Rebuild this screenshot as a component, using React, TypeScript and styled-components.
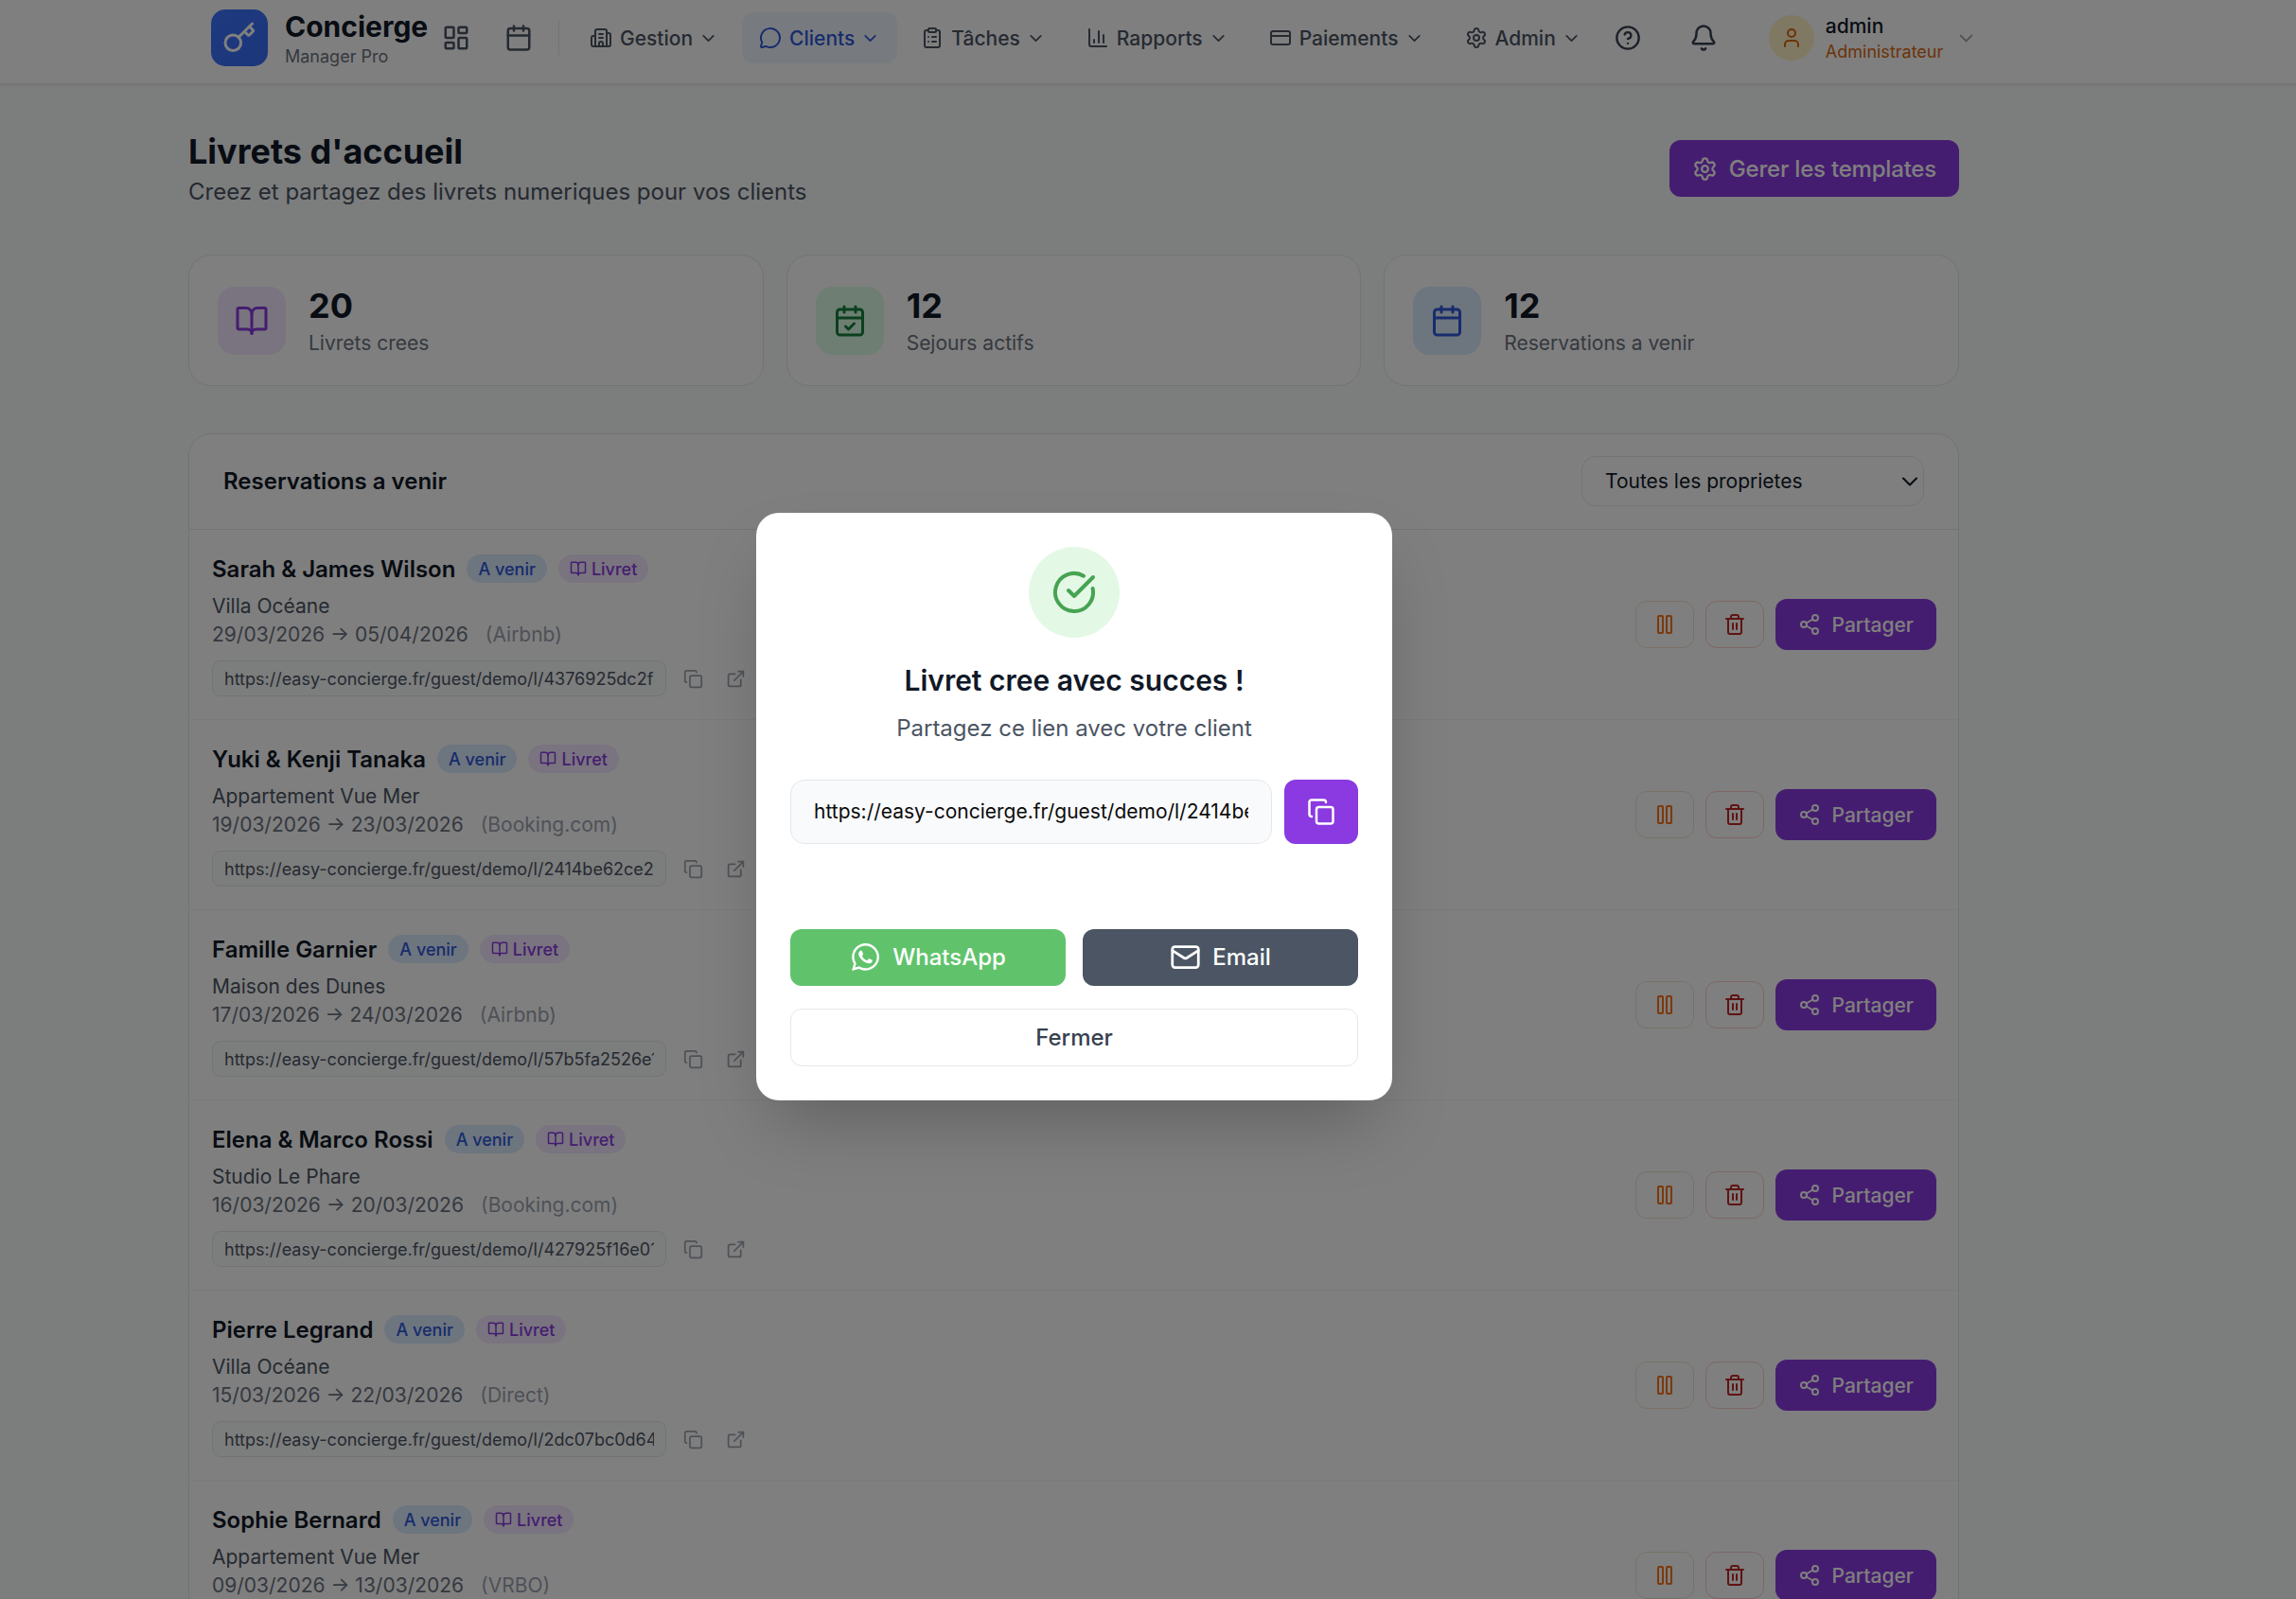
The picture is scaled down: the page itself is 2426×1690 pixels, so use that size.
import React from "react";
import styled, { createGlobalStyle } from "styled-components";
import {
  BookOpen, Building2, Bell, CalendarCheck, Calendar, ChartColumn, ChevronDown, CircleCheckBig, CircleHelp,
  ClipboardList, Copy, CreditCard, ExternalLink, Key, LayoutDashboard, Mail, MessageCircle, Pause, Settings,
  Share2, Trash2, User,
} from "lucide-react";
import { FaWhatsapp } from "react-icons/fa";

const Global = createGlobalStyle`
  html, body { margin: 0; padding: 0; background: #f9fafb; }
  body { font-family: Inter, "Liberation Sans", sans-serif; color: #111827; }
  * { box-sizing: border-box; }
`;

const Page = styled.div`
  width: 2426px;
  height: 1690px;
  overflow: hidden;
  position: relative;
`;

const Nav = styled.header`
  height: 89px;
  background: #fff;
  border-bottom: 1px solid #e5e7eb;
  box-shadow: 0 1px 3px rgba(0,0,0,.08);
  display: flex;
  align-items: center;
  padding: 0 0 8px 223px;
`;
const LogoBox = styled.div`
  width: 60px; height: 60px; border-radius: 15px; flex: none;
  background: linear-gradient(135deg, #3c74ff, #3a6cf5);
  display: flex; align-items: center; justify-content: center; color: #fff;
`;
const Brand = styled.div`
  margin-left: 18px; width: 151px; flex: none;
  display: flex; flex-direction: column;
`;
const BrandTitle = styled.span`
  font-size: 30px; line-height: 40px; font-weight: 700; color: #111827; white-space: nowrap;
`;
const BrandSub = styled.span`
  font-size: 18px; line-height: 24px; color: #6b7280; white-space: nowrap;
`;
const IconBtn = styled.div<{ $ml?: number }>`
  width: 42px; height: 42px; flex: none; margin-left: ${p => p.$ml ?? 0}px;
  display: flex; align-items: center; justify-content: center; color: #4b5563;
`;
const Divider = styled.div`
  width: 1px; height: 36px; background: #e5e7eb; margin: 0 14px 0 21px; flex: none;
`;
const NavItem = styled.div<{ $active?: boolean }>`
  display: flex; align-items: center; height: 54px; padding: 0 18px; margin-right: 7px; flex: none;
  border-radius: 12px; gap: 8px;
  font-size: 21px; font-weight: 500;
  color: ${p => (p.$active ? "#2f58d8" : "#4b5563")};
  background: ${p => (p.$active ? "#eff6ff" : "transparent")};
  svg:last-child { margin-left: -2px; }
`;
const RoundBtn = styled.div<{ $ml: number }>`
  width: 48px; height: 48px; flex: none; margin-left: ${p => p.$ml}px;
  display: flex; align-items: center; justify-content: center; color: #374151;
`;
const UserBox = styled.div`
  display: flex; align-items: center; margin-left: 45px; flex: none;
`;
const Avatar = styled.div`
  width: 48px; height: 48px; border-radius: 50%; background: #fef3c7; color: #d9660f;
  display: flex; align-items: center; justify-content: center; margin-right: 12px;
`;
const UserText = styled.div`
  display: flex; flex-direction: column; margin-right: 13px;
`;
const UserName = styled.span`
  font-size: 21px; line-height: 30px; font-weight: 500; color: #111827;
`;
const UserRole = styled.span`
  font-size: 18px; line-height: 24px; color: #d9660f;
`;
const UserChevron = styled.span`
  display: flex; color: #9ca3af;
`;

const Main = styled.main`
  width: 1871px;
  margin: 0 0 0 199px;
  padding-top: 46px;
`;
const HeadRow = styled.div`
  display: flex; align-items: center; justify-content: space-between;
`;
const H1 = styled.h1`
  margin: 0; font-size: 36px; line-height: 50px; font-weight: 700; color: #111827;
`;
const Sub = styled.p`
  margin: 0; font-size: 24px; line-height: 36px; color: #4b5563;
`;
const PrimaryBtn = styled.div<{ $small?: boolean }>`
  display: flex; align-items: center; flex: none;
  height: ${p => (p.$small ? 54 : 60)}px;
  padding: 0 24px;
  gap: 12px;
  background: #8a3ae0; color: #fff; border-radius: 12px;
  font-size: ${p => (p.$small ? 21 : 24)}px; font-weight: 500; white-space: nowrap;
  letter-spacing: ${p => (p.$small ? 0 : -0.2)}px;
`;
const Stats = styled.section`
  display: grid; grid-template-columns: repeat(3, 1fr); gap: 24px; margin-top: 48px;
`;
const StatCard = styled.div`
  height: 139px; background: #fff; border: 1px solid #e5e7eb; border-radius: 24px;
  display: flex; align-items: center; padding: 0 30px; gap: 24px;
`;
const toneBg: Record<string, string> = { purple: "#f3e8ff", green: "#dcfce7", blue: "#dbeafe" };
const toneFg: Record<string, string> = { purple: "#8a3ae0", green: "#15803d", blue: "#2f58d8" };
const StatIcon = styled.div<{ $tone: string }>`
  width: 72px; height: 72px; border-radius: 18px; flex: none;
  display: flex; align-items: center; justify-content: center;
  background: ${p => toneBg[p.$tone]}; color: ${p => toneFg[p.$tone]};
`;
const StatText = styled.div`
  display: flex; flex-direction: column; padding-top: 2px;
`;
const StatValue = styled.span`
  font-size: 36px; line-height: 42px; font-weight: 700; color: #111827;
`;
const StatLabel = styled.span`
  font-size: 21px; line-height: 30px; margin-top: 4px; color: #6b7280;
`;

const Panel = styled.section`
  margin-top: 50px; background: #fff; border: 1px solid #e5e7eb; border-radius: 24px; overflow: hidden;
`;
const PanelHead = styled.div`
  height: 101px; border-bottom: 1px solid #e5e7eb; padding: 0 36px 1px 36px;
  display: flex; align-items: center; justify-content: space-between;
`;
const PanelTitle = styled.h2`
  margin: 0; font-size: 24px; line-height: 36px; font-weight: 600; color: #111827;
`;
const SelectBox = styled.div`
  width: 362px; height: 53px; border: 1px solid #e5e7eb; border-radius: 15px; background: #fff;
  display: flex; align-items: center; justify-content: space-between; padding: 0 0 0 24px;
  font-size: 21px; color: #111827;
`;
const Row = styled.article`
  height: 201px; border-bottom: 1px solid #f3f4f6; padding: 24px 23px 24px 24px;
  display: flex; align-items: center; justify-content: space-between;
`;
const RowLeft = styled.div`
  display: flex; flex-direction: column;
`;
const NameLine = styled.div`
  display: flex; align-items: center; gap: 12px; height: 34px;
`;
const Name = styled.span`
  font-size: 24px; font-weight: 600; color: #111827; white-space: nowrap;
`;
const Badge = styled.span<{ $tone: string }>`
  height: 30px; padding: 0 12px; border-radius: 15px; display: inline-flex; align-items: center; gap: 5px;
  font-size: 18px; font-weight: 500; white-space: nowrap;
  background: ${p => toneBg[p.$tone]};
  color: ${p => (p.$tone === "blue" ? "#2f58d8" : "#8a3ae0")};
`;
const Property = styled.div`
  margin-top: 8px; font-size: 21px; line-height: 30px; color: #4b5563;
`;
const Dates = styled.div`
  font-size: 21px; line-height: 30px; color: #6b7280; white-space: nowrap;
`;
const Source = styled.span`
  margin-left: 18px; color: #9ca3af;
`;
const UrlLine = styled.div`
  margin-top: 12px; display: flex; align-items: center;
`;
const UrlBox = styled.div`
  width: 480px; height: 38px; padding: 0 12px; margin-right: 6px; border: 1px solid #e5e7eb; border-radius: 9px; background: #f9fafb;
  display: flex; align-items: center; font-size: 18px; color: #4b5563;
`;
const Clip = styled.span`
  display: block; width: 100%; overflow: hidden; white-space: nowrap;
`;
const GhostIcon = styled.div`
  width: 45px; height: 38px; display: flex; align-items: center; justify-content: center; color: #9ca3af;
`;
const Actions = styled.div`
  display: flex; align-items: center; gap: 12px; flex: none;
`;
const OutlineBtn = styled.div<{ $tone: "orange" | "red" }>`
  width: 62px; height: 50px; border-radius: 12px; display: flex; align-items: center; justify-content: center;
  border: 1px solid ${p => (p.$tone === "orange" ? "#f3e2d0" : "#fecaca")};
  color: ${p => (p.$tone === "orange" ? "#f97316" : "#c02626")};
`;

const Overlay = styled.div`
  position: absolute; inset: 0; background: rgba(0,0,0,.5);
  display: flex; align-items: center; justify-content: center; padding: 14px 156px 0 0;
`;
const Modal = styled.div`
  width: 672px; background: #fff; border-radius: 24px; padding: 36px;
  display: flex; flex-direction: column; align-items: stretch;
  box-shadow: 0 37px 75px -18px rgba(0,0,0,.25);
`;
const SuccessCircle = styled.div`
  width: 96px; height: 96px; border-radius: 50%; background: #e3f9e6; color: #46a352; align-self: center;
  display: flex; align-items: center; justify-content: center;
`;
const ModalTitle = styled.h3`
  margin: 23px 0 0; text-align: center; font-size: 30px; line-height: 45px; font-weight: 600; color: #111827;
`;
const ModalSub = styled.p`
  margin: 10px 0 0; text-align: center; font-size: 24px; line-height: 36px; color: #4b5563;
`;
const LinkRow = styled.div`
  margin-top: 36px; display: flex; gap: 13px;
`;
const LinkField = styled.div`
  flex: 1; min-width: 0; height: 68px; padding: 0 24px; border: 1px solid #e5e7eb; border-radius: 15px;
  background: #f9fafb; display: flex; align-items: center; font-size: 21px; color: #0b0b0b;
`;
const CopyBtn = styled.div`
  width: 78px; height: 68px; flex: none; border-radius: 12px; background: #8a3ae0; color: #fff;
  display: flex; align-items: center; justify-content: center;
`;
const ShareRow = styled.div`
  margin-top: 90px; display: grid; grid-template-columns: 1fr 1fr; gap: 18px;
`;
const ShareBtn = styled.div<{ $bg: string }>`
  height: 60px; border-radius: 12px; background: ${p => p.$bg}; color: #fff;
  display: flex; align-items: center; justify-content: center; gap: 12px;
  font-size: 24px; font-weight: 500;
`;
const CloseBtn = styled.div`
  margin-top: 24px; height: 61px; border: 1px solid #e5e7eb; border-radius: 12px; background: #fff;
  display: flex; align-items: center; justify-content: center; font-size: 24px; font-weight: 500; color: #374151;
`;

const navItems = [
  { label: "Gestion", Icon: Building2 },
  { label: "Clients", Icon: MessageCircle, active: true },
  { label: "Tâches", Icon: ClipboardList },
  { label: "Rapports", Icon: ChartColumn },
  { label: "Paiements", Icon: CreditCard },
  { label: "Admin", Icon: Settings },
];
const stats = [
  { tone: "purple", Icon: BookOpen, value: "20", label: "Livrets crees" },
  { tone: "green", Icon: CalendarCheck, value: "12", label: "Sejours actifs" },
  { tone: "blue", Icon: Calendar, value: "12", label: "Reservations a venir" },
];
const base = "https://easy-concierge.fr/guest/demo/l/";
const rows = [
  { name: "Sarah & James Wilson", place: "Villa Océane", dates: "29/03/2026 → 05/04/2026", src: "Airbnb", id: "4376925dc2f8a1b6" },
  { name: "Yuki & Kenji Tanaka", place: "Appartement Vue Mer", dates: "19/03/2026 → 23/03/2026", src: "Booking.com", id: "2414be62ce2f9c07" },
  { name: "Famille Garnier", place: "Maison des Dunes", dates: "17/03/2026 → 24/03/2026", src: "Airbnb", id: "57b5fa2526e1d384" },
  { name: "Elena & Marco Rossi", place: "Studio Le Phare", dates: "16/03/2026 → 20/03/2026", src: "Booking.com", id: "427925f16e01ab52" },
  { name: "Pierre Legrand", place: "Villa Océane", dates: "15/03/2026 → 22/03/2026", src: "Direct", id: "2dc07bc0d64e7f19" },
  { name: "Sophie Bernard", place: "Appartement Vue Mer", dates: "09/03/2026 → 13/03/2026", src: "VRBO", id: "6ab13c9e07d24f58" },
];

export default function App() {
  return (
    <Page>
      <Global />
      <Nav>
        <LogoBox><Key size={36} /></LogoBox>
        <Brand>
          <BrandTitle>Concierge</BrandTitle>
          <BrandSub>Manager Pro</BrandSub>
        </Brand>
        <IconBtn $ml={9}><LayoutDashboard size={30} /></IconBtn>
        <IconBtn $ml={24}><Calendar size={30} /></IconBtn>
        <Divider />
        {navItems.map(({ label, Icon, active }) => (
          <NavItem key={label} $active={active}>
            <Icon size={24} />
            {label}
            <ChevronDown size={21} />
          </NavItem>
        ))}
        <RoundBtn $ml={0}><CircleHelp size={28} /></RoundBtn>
        <RoundBtn $ml={32}><Bell size={30} /></RoundBtn>
        <UserBox>
          <Avatar><User size={24} /></Avatar>
          <UserText>
            <UserName>admin</UserName>
            <UserRole>Administrateur</UserRole>
          </UserText>
          <UserChevron><ChevronDown size={23} /></UserChevron>
        </UserBox>
      </Nav>
      <Main>
        <HeadRow>
          <div>
            <H1>Livrets d'accueil</H1>
            <Sub>Creez et partagez des livrets numeriques pour vos clients</Sub>
          </div>
          <PrimaryBtn><Settings size={27} />Gerer les templates</PrimaryBtn>
        </HeadRow>
        <Stats>
          {stats.map(({ tone, Icon, value, label }) => (
            <StatCard key={label}>
              <StatIcon $tone={tone}><Icon size={36} /></StatIcon>
              <StatText>
                <StatValue>{value}</StatValue>
                <StatLabel>{label}</StatLabel>
              </StatText>
            </StatCard>
          ))}
        </Stats>
        <Panel>
          <PanelHead>
            <PanelTitle>Reservations a venir</PanelTitle>
            <SelectBox>Toutes les proprietes<ChevronDown size={28} strokeWidth={1.8} /></SelectBox>
          </PanelHead>
          {rows.map(r => (
            <Row key={r.name}>
              <RowLeft>
                <NameLine>
                  <Name>{r.name}</Name>
                  <Badge $tone="blue">A venir</Badge>
                  <Badge $tone="purple"><BookOpen size={18} />Livret</Badge>
                </NameLine>
                <Property>{r.place}</Property>
                <Dates>{r.dates}<Source>({r.src})</Source></Dates>
                <UrlLine>
                  <UrlBox><Clip>{base + r.id}</Clip></UrlBox>
                  <GhostIcon><Copy size={21} /></GhostIcon>
                  <GhostIcon><ExternalLink size={21} /></GhostIcon>
                </UrlLine>
              </RowLeft>
              <Actions>
                <OutlineBtn $tone="orange"><Pause size={24} /></OutlineBtn>
                <OutlineBtn $tone="red"><Trash2 size={24} /></OutlineBtn>
                <PrimaryBtn $small><Share2 size={24} />Partager</PrimaryBtn>
              </Actions>
            </Row>
          ))}
        </Panel>
      </Main>
      <Overlay>
        <Modal>
          <SuccessCircle><CircleCheckBig size={48} /></SuccessCircle>
          <ModalTitle>Livret cree avec succes !</ModalTitle>
          <ModalSub>Partagez ce lien avec votre client</ModalSub>
          <LinkRow>
            <LinkField><Clip>{base + "2414be62ce2f9c07"}</Clip></LinkField>
            <CopyBtn><Copy size={30} /></CopyBtn>
          </LinkRow>
          <ShareRow>
            <ShareBtn $bg="#60c36c"><FaWhatsapp size={33} />WhatsApp</ShareBtn>
            <ShareBtn $bg="#4b5563"><Mail size={33} />Email</ShareBtn>
          </ShareRow>
          <CloseBtn>Fermer</CloseBtn>
        </Modal>
      </Overlay>
    </Page>
  );
}
